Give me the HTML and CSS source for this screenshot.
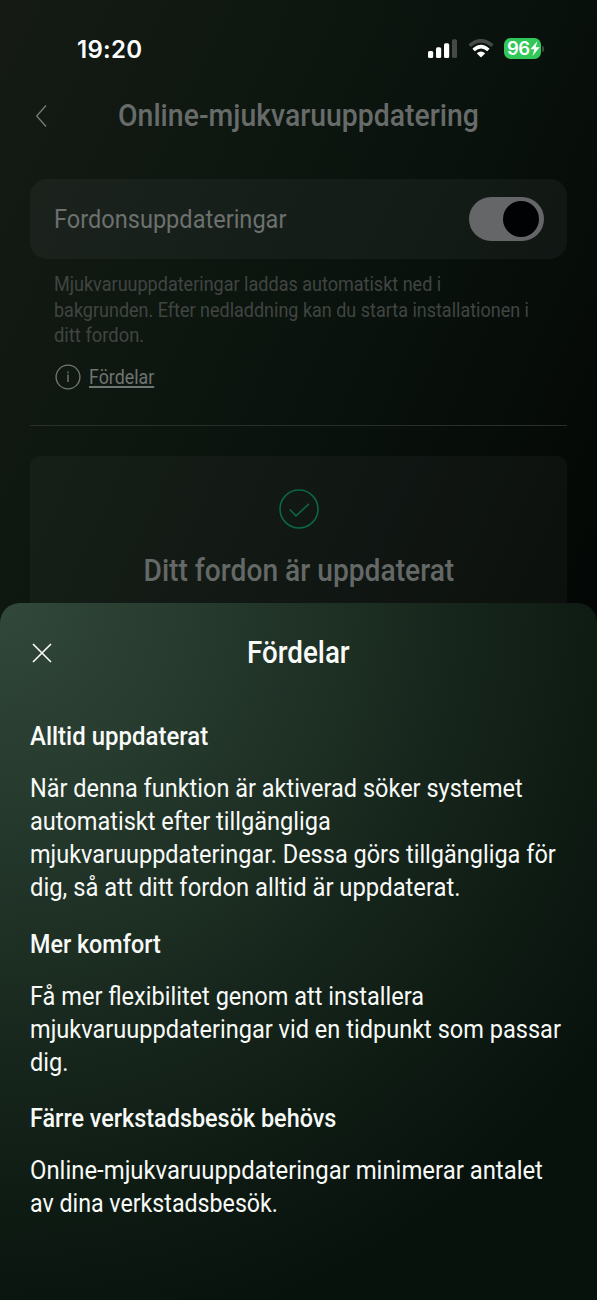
FILE: index.html
```html
<!DOCTYPE html>
<html lang="sv">
<head>
<meta charset="utf-8">
<title>Online-mjukvaruuppdatering</title>
<link rel="stylesheet" href="styles.css">
</head>
<body>
<div class="phone">
  <header class="status">
    <span class="clock">19:20</span>
    <div class="indicators">
      <svg class="signal" width="30" height="20" viewBox="0 0 30 20"><g fill="#fff"><rect x="0" y="12" width="5.2" height="7" rx="1.6"/><rect x="8" y="8.3" width="5.2" height="10.7" rx="1.6"/><rect x="16" y="4.3" width="5.2" height="14.7" rx="1.6"/></g><rect x="24" y="0.3" width="5" height="18.7" rx="1.6" fill="#454947"/></svg>
      <svg class="wifi" width="26" height="20" viewBox="0 0 26 20"><g fill="none" stroke-width="3.6"><path d="M1.6 6.6Q13-3 24.4 6.6" stroke="#454947"/><path d="M5.6 11Q13 4.4 20.4 11" stroke="#fff"/></g><path d="M8.8 14.2Q13 10.8 17.2 14.2L13.8 17.8Q13 18.6 12.2 17.8Z" fill="#fff"/></svg>
      <div class="battery"><span>96</span><svg width="10" height="15" viewBox="0 0 10 15"><path d="M7.5 0 .4 8.3h4L2.5 15 9.7 6.3H5.6Z" fill="#fff"/></svg></div><i class="nub"></i>
    </div>
  </header>
  <div class="navbar">
    <svg class="back" width="12" height="24" viewBox="0 0 12 24"><path d="M11 1.5 1.7 12l9.3 10.5" fill="none" stroke="#747876" stroke-width="1.4"/></svg>
    <h1 class="fit" data-w="361">Online-mjukvaruuppdatering</h1>
  </div>
  <main class="content">
    <section class="setting"><span class="fit" data-w="232">Fordonsuppdateringar</span><span class="toggle"><i></i></span></section>
    <p class="hint"><span class="fit" data-w="387.5">Mjukvaruuppdateringar laddas automatiskt ned i</span><span class="fit" data-w="475">bakgrunden. Efter nedladdning kan du starta installationen i</span><span class="fit" data-w="90">ditt fordon.</span></p>
    <a class="info"><svg width="26" height="26" viewBox="0 0 26 26"><circle cx="13" cy="13" r="11.9" fill="none" stroke="#747876" stroke-width="1.3"/><path d="M13 10.6v7.4M13 7.6v1.7" stroke="#747876" stroke-width="1.4"/></svg><span class="fit" data-w="65">Fördelar</span></a>
    <hr>
    <section class="state">
      <svg width="40" height="40" viewBox="0 0 40 40" fill="none" stroke="#0b6646" stroke-width="1.6"><circle cx="20" cy="20" r="19"/><path d="m10.8 20.5 6.2 6.3L30 14.8"/></svg>
      <h2 class="fit" data-w="311">Ditt fordon är uppdaterat</h2>
    </section>
  </main>
  <section class="sheet">
    <div class="sheet-head">
      <svg width="20" height="20" viewBox="0 0 20 20"><path d="m1 1 18 18M19 1 1 19" stroke="#fff" stroke-width="1.6"/></svg>
      <h2 class="fit" data-w="103">Fördelar</h2>
    </div>
    <h3><span class="fit" data-w="178">Alltid uppdaterat</span></h3>
    <p><span class="fit" data-w="492.5">När denna funktion är aktiverad söker systemet</span><span class="fit" data-w="301">automatiskt efter tillgängliga</span><span class="fit" data-w="526">mjukvaruuppdateringar. Dessa görs tillgängliga för</span><span class="fit" data-w="431">dig, så att ditt fordon alltid är uppdaterat.</span></p>
    <h3><span class="fit" data-w="131">Mer komfort</span></h3>
    <p><span class="fit" data-w="394">Få mer flexibilitet genom att installera</span><span class="fit" data-w="531">mjukvaruuppdateringar vid en tidpunkt som passar</span><span class="fit" data-w="38">dig.</span></p>
    <h3><span class="fit" data-w="306">Färre verkstadsbesök behövs</span></h3>
    <p><span class="fit" data-w="512.5">Online-mjukvaruuppdateringar minimerar antalet</span><span class="fit" data-w="248">av dina verkstadsbesök.</span></p>
  </section>
</div>
<script src="fit.js"></script>
</body>
</html>
```
FILE: fit.js
```js
// Condense every line of text to its design width.
document.querySelectorAll('.fit').forEach(function (line) {
  var ratio = line.dataset.w / line.offsetWidth;
  line.style.transform = 'scaleX(' + ratio.toFixed(4) + ')';
});
```
FILE: styles.css
```css
* { box-sizing: border-box; }
body { margin: 0; background: #050a07; font-family: Roboto, "Liberation Sans", sans-serif; }
h1, h2, h3, p { margin: 0; }
svg { display: block; flex: none; }
.phone {
  width: 597px; height: 1300px; overflow: hidden; display: flex; flex-direction: column;
  background: linear-gradient(115deg, #151b14 0%, #0f1711 30%, #09110c 62%, #030604 100%) 0 0 / 100% 650px no-repeat;
}
.fit { display: block; width: max-content; white-space: nowrap; transform-origin: 0 50%; }
.status { height: 96px; padding: 0 53px 0 77px; display: flex; justify-content: space-between; align-items: center; flex: none; }
.clock { color: #fff; font: 600 24px/30px Inter, sans-serif; letter-spacing: .3px; padding-top: 3px; }
.indicators { display: flex; align-items: center; padding-top: 1px; }
.wifi { margin-left: 10px; }
.battery { margin-left: 10px; width: 37px; height: 21px; border-radius: 6.5px; background: #32c759; display: flex; align-items: center; padding-left: 3px; color: #fff; }
.battery span { font: 600 18.5px/21px Inter, sans-serif; letter-spacing: -.5px; }
.nub { width: 2px; height: 6px; border-radius: 0 2px 2px 0; background: #454947; margin-left: 1px; }
.navbar { height: 83px; flex: none; padding-left: 35px; display: flex; align-items: flex-start; }
.back { margin-top: 8px; }
h1 { margin: 1px 0 0 71px; font-weight: 500; font-size: 31px; line-height: 38px; color: #676b69; }
.content { padding: 0 30px; height: 424px; flex: none; }
.setting { height: 80px; border-radius: 17px; background: rgba(110,120,115,.1); padding: 0 23px 0 24px; display: flex; justify-content: space-between; align-items: center; font-size: 26px; line-height: 34px; color: #6c706e; }
.toggle { width: 75px; height: 44px; border-radius: 22px; background: #656668; display: flex; align-items: center; justify-content: flex-end; padding-right: 5px; }
.toggle i { width: 36px; height: 36px; border-radius: 50%; background: #010203; }
.hint { padding: 13px 0 0 23.5px; font-size: 20px; line-height: 25.5px; color: #404542; }
.info { margin: 15px 0 0 25px; display: flex; align-items: center; gap: 8px; height: 26px; font-size: 20px; line-height: 26px; color: #707472; }
.info span { text-decoration: underline; text-underline-offset: 2px; text-decoration-thickness: 1.5px; }
hr { border: 0; height: 1px; background: #292e2a; margin: 35px 0 30px; }
.state { height: 170px; border-radius: 10px; background: rgba(110,120,115,.08); padding-top: 33.5px; display: flex; flex-direction: column; align-items: center; }
.state h2 { transform-origin: 50% 50%; margin-top: 23px; font-weight: 500; font-size: 31px; line-height: 38px; color: #646866; }
.sheet {
  height: 697px; flex: none; border-radius: 20px 20px 0 0; padding: 31px 30px 0; color: #f8faf8;
  background: radial-gradient(125% 108% at 0 0, #31483a 0%, #24372b 32%, #16251b 62%, #0b1710 88%, #07120c 100%);
  font-size: 26px; line-height: 33px;
}
.sheet-head { height: 38px; display: grid; grid-template-columns: 20px 1fr 20px; align-items: center; margin: 0 0 48px; padding: 0 1.5px; }
.sheet-head h2 { justify-self: center; transform-origin: 50% 50%; font-weight: 500; font-size: 31px; line-height: 38px; }
.sheet h3 { font-weight: 500; font-size: 26px; margin-bottom: 19px; }
.sheet p { margin-bottom: 23.5px; }
```
